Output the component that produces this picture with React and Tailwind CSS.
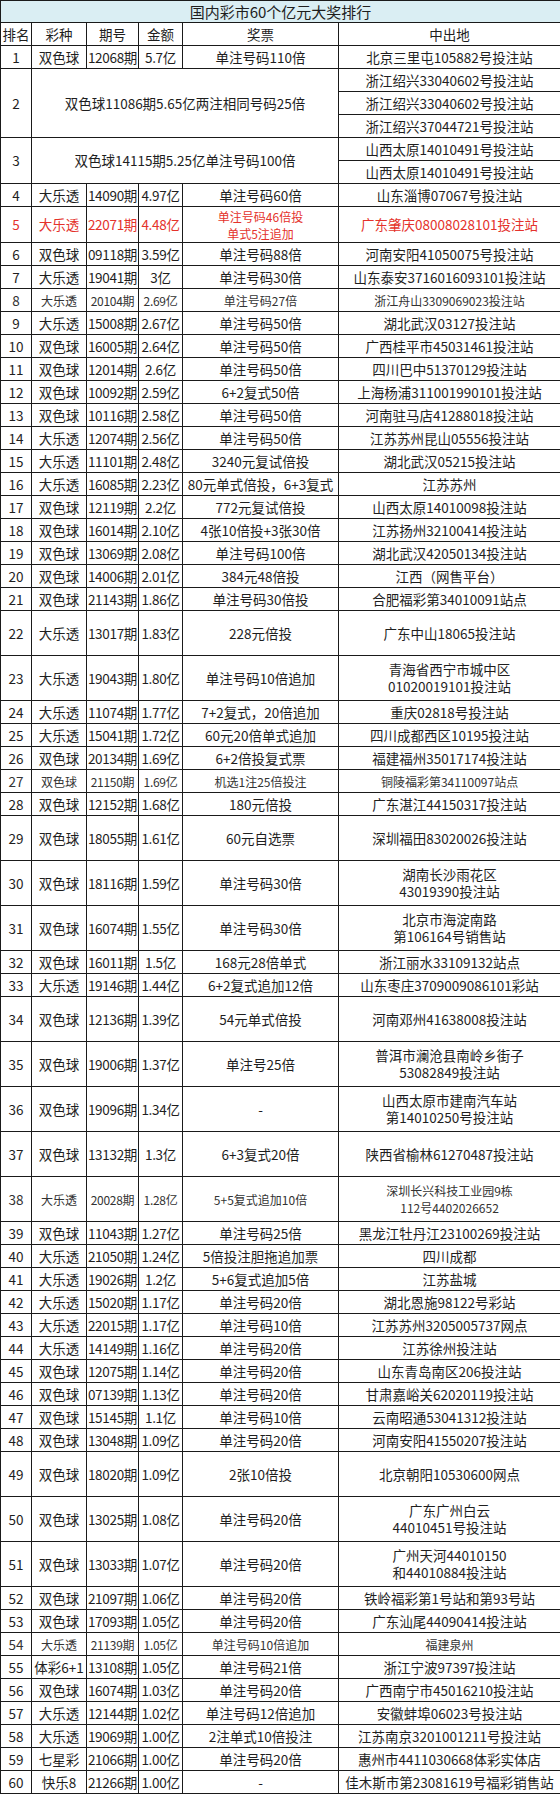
import React from "react";

// [排名, 彩种, 期号, 金额, 奖票, 中出地, flags]  t = tall row, s = small text, r = red
const rows = [
  [1, "双色球", "12068期", "5.7亿", "单注号码110倍", "北京三里屯105882号投注站"],
  [4, "大乐透", "14090期", "4.97亿", "单注号码60倍", "山东淄博07067号投注站"],
  [5, "大乐透", "22071期", "4.48亿", "单注号码46倍投\n单式5注追加", "广东肇庆08008028101投注站", "r"],
  [6, "双色球", "09118期", "3.59亿", "单注号码88倍", "河南安阳41050075号投注站"],
  [7, "大乐透", "19041期", "3亿", "单注号码30倍", "山东泰安3716016093101投注站"],
  [8, "大乐透", "20104期", "2.69亿", "单注号码27倍", "浙江舟山3309069023投注站", "s"],
  [9, "大乐透", "15008期", "2.67亿", "单注号码50倍", "湖北武汉03127投注站"],
  [10, "双色球", "16005期", "2.64亿", "单注号码50倍", "广西桂平市45031461投注站"],
  [11, "双色球", "12014期", "2.6亿", "单注号码50倍", "四川巴中51370129投注站"],
  [12, "双色球", "10092期", "2.59亿", "6+2复式50倍", "上海杨浦311001990101投注站"],
  [13, "双色球", "10116期", "2.58亿", "单注号码50倍", "河南驻马店41288018投注站"],
  [14, "大乐透", "12074期", "2.56亿", "单注号码50倍", "江苏苏州昆山05556投注站"],
  [15, "大乐透", "11101期", "2.48亿", "3240元复试倍投", "湖北武汉05215投注站"],
  [16, "大乐透", "16085期", "2.23亿", "80元单式倍投，6+3复式", "江苏苏州"],
  [17, "双色球", "12119期", "2.2亿", "772元复试倍投", "山西太原14010098投注站"],
  [18, "双色球", "16014期", "2.10亿", "4张10倍投+3张30倍", "江苏扬州32100414投注站"],
  [19, "双色球", "13069期", "2.08亿", "单注号码100倍", "湖北武汉42050134投注站"],
  [20, "双色球", "14006期", "2.01亿", "384元48倍投", "江西（网售平台）"],
  [21, "双色球", "21143期", "1.86亿", "单注号码30倍投", "合肥福彩第34010091站点"],
  [22, "大乐透", "13017期", "1.83亿", "228元倍投", "广东中山18065投注站", "t"],
  [23, "大乐透", "19043期", "1.80亿", "单注号码10倍追加", "青海省西宁市城中区\n01020019101投注站", "t"],
  [24, "大乐透", "11074期", "1.77亿", "7+2复式，20倍追加", "重庆02818号投注站"],
  [25, "大乐透", "15041期", "1.72亿", "60元20倍单式追加", "四川成都西区10195投注站"],
  [26, "双色球", "20134期", "1.69亿", "6+2倍投复式票", "福建福州35017174投注站"],
  [27, "双色球", "21150期", "1.69亿", "机选1注25倍投注", "铜陵福彩第34110097站点", "s"],
  [28, "双色球", "12152期", "1.68亿", "180元倍投", "广东湛江44150317投注站"],
  [29, "双色球", "18055期", "1.61亿", "60元自选票", "深圳福田83020026投注站", "t"],
  [30, "双色球", "18116期", "1.59亿", "单注号码30倍", "湖南长沙雨花区\n43019390投注站", "t"],
  [31, "双色球", "16074期", "1.55亿", "单注号码30倍", "北京市海淀南路\n第106164号销售站", "t"],
  [32, "双色球", "16011期", "1.5亿", "168元28倍单式", "浙江丽水33109132站点"],
  [33, "大乐透", "19146期", "1.44亿", "6+2复式追加12倍", "山东枣庄3709009086101彩站"],
  [34, "双色球", "12136期", "1.39亿", "54元单式倍投", "河南邓州41638008投注站", "t"],
  [35, "双色球", "19006期", "1.37亿", "单注号25倍", "普洱市澜沧县南岭乡街子\n53082849投注站", "t"],
  [36, "双色球", "19096期", "1.34亿", "-", "山西太原市建南汽车站\n第14010250号投注站", "t"],
  [37, "双色球", "13132期", "1.3亿", "6+3复式20倍", "陕西省榆林61270487投注站", "t"],
  [38, "大乐透", "20028期", "1.28亿", "5+5复式追加10倍", "深圳长兴科技工业园9栋\n112号4402026652", "ts"],
  [39, "双色球", "11043期", "1.27亿", "单注号码25倍", "黑龙江牡丹江23100269投注站"],
  [40, "大乐透", "21050期", "1.24亿", "5倍投注胆拖追加票", "四川成都"],
  [41, "大乐透", "19026期", "1.2亿", "5+6复式追加5倍", "江苏盐城"],
  [42, "大乐透", "15020期", "1.17亿", "单注号码20倍", "湖北恩施98122号彩站"],
  [43, "大乐透", "22015期", "1.17亿", "单注号码10倍", "江苏苏州3205005737网点"],
  [44, "大乐透", "14149期", "1.16亿", "单注号码20倍", "江苏徐州投注站"],
  [45, "双色球", "12075期", "1.14亿", "单注号码20倍", "山东青岛南区206投注站"],
  [46, "双色球", "07139期", "1.13亿", "单注号码20倍", "甘肃嘉峪关62020119投注站"],
  [47, "双色球", "15145期", "1.1亿", "单注号码10倍", "云南昭通53041312投注站"],
  [48, "双色球", "13048期", "1.09亿", "单注号码20倍", "河南安阳41550207投注站"],
  [49, "双色球", "18020期", "1.09亿", "2张10倍投", "北京朝阳10530600网点", "t"],
  [50, "双色球", "13025期", "1.08亿", "单注号码20倍", "广东广州白云\n44010451号投注站", "t"],
  [51, "双色球", "13033期", "1.07亿", "单注号码20倍", "广州天河44010150\n和44010884投注站", "t"],
  [52, "双色球", "21097期", "1.06亿", "单注号码20倍", "铁岭福彩第1号站和第93号站"],
  [53, "双色球", "17093期", "1.05亿", "单注号码20倍", "广东汕尾44090414投注站"],
  [54, "大乐透", "21139期", "1.05亿", "单注号码10倍追加", "福建泉州", "s"],
  [55, "体彩6+1", "13108期", "1.05亿", "单注号码21倍", "浙江宁波97397投注站"],
  [56, "双色球", "16074期", "1.03亿", "单注号码20倍", "广西南宁市45016210投注站"],
  [57, "大乐透", "12144期", "1.02亿", "单注号码12倍追加", "安徽蚌埠06023号投注站"],
  [58, "大乐透", "19069期", "1.00亿", "2注单式10倍投注", "江苏南京3201001211号投注站"],
  [59, "七星彩", "21066期", "1.00亿", "单注号码20倍", "惠州市4411030668体彩实体店"],
  [60, "快乐8", "21266期", "1.00亿", "-", "佳木斯市第23081619号福彩销售站"],
];

const cell =
  "border border-[#1a1a1a] p-0 text-center align-middle whitespace-pre overflow-hidden leading-[17px]";

const Row = ({ r }) => {
  const [n, kind, issue, amount, ticket, place, flags = ""] = r;
  const tall = flags.includes("t");
  const small = flags.includes("s");
  const red = flags.includes("r");
  const h = red ? "h-[36px]" : tall ? "h-[45px]" : "h-[23px]";
  const color = red ? "text-[#e4322b]" : small ? "text-[#333]" : "";
  const sz = small ? "text-[12px]" : "";
  return (
    <tr className={`${h} ${color}`}>
      <td className={cell}>{n}</td>
      <td className={`${cell} ${sz}`}>{kind}</td>
      <td className={`${cell} ${sz} tracking-[-0.3px]`}>{issue}</td>
      <td className={`${cell} ${sz} tracking-[-0.3px]`}>{amount}</td>
      <td className={`${cell} ${sz} ${red ? "text-[12px]" : ""}`}>{ticket}</td>
      <td className={`${cell} ${sz}`}>{place}</td>
    </tr>
  );
};

export default function App() {
  return (
    <div className="w-[560px] bg-white text-[13.5px] text-[#1e1e1e] font-['Noto_Sans_CJK_SC',sans-serif]">
      <table className="w-[560px] table-fixed border-collapse">
        <colgroup>
          <col className="w-[31px]" />
          <col className="w-[55px]" />
          <col className="w-[52px]" />
          <col className="w-[44px]" />
          <col className="w-[156px]" />
          <col className="w-[222px]" />
        </colgroup>
        <tbody>
          <tr className="h-[22px]">
            <td colSpan={6} className={`${cell} bg-[#daeef3] text-[15px]`}>
              国内彩市60个亿元大奖排行
            </td>
          </tr>
          <tr className="h-[23px]">
            <td className={cell}>排名</td>
            <td className={cell}>彩种</td>
            <td className={cell}>期号</td>
            <td className={cell}>金额</td>
            <td className={cell}>奖票</td>
            <td className={cell}>中出地</td>
          </tr>
          <Row r={rows[0]} />
          <tr className="h-[23px]">
            <td rowSpan={3} className={cell}>2</td>
            <td rowSpan={3} colSpan={4} className={cell}>
              双色球11086期5.65亿两注相同号码25倍
            </td>
            <td className={cell}>浙江绍兴33040602号投注站</td>
          </tr>
          <tr className="h-[23px]">
            <td className={cell}>浙江绍兴33040602号投注站</td>
          </tr>
          <tr className="h-[23px]">
            <td className={cell}>浙江绍兴37044721号投注站</td>
          </tr>
          <tr className="h-[23px]">
            <td rowSpan={2} className={cell}>3</td>
            <td rowSpan={2} colSpan={4} className={cell}>
              双色球14115期5.25亿单注号码100倍
            </td>
            <td className={cell}>山西太原14010491号投注站</td>
          </tr>
          <tr className="h-[23px]">
            <td className={cell}>山西太原14010491号投注站</td>
          </tr>
          {rows.slice(1).map((r) => (
            <Row key={r[0]} r={r} />
          ))}
        </tbody>
      </table>
    </div>
  );
}
